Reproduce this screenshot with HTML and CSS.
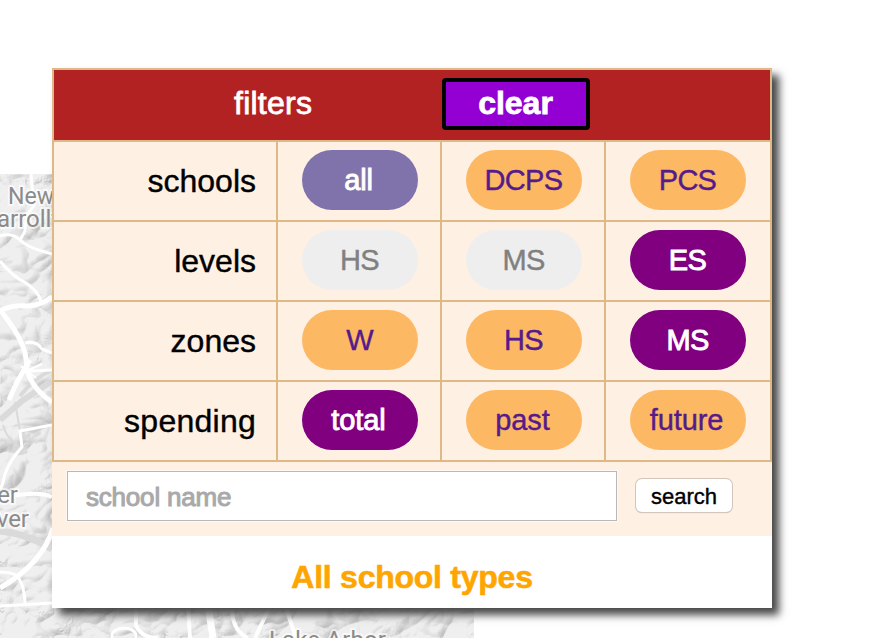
FILE: index.html
```html
<!DOCTYPE html>
<html lang="en">
<head>
<meta charset="utf-8">
<title>School filters</title>
<link rel="stylesheet" href="styles.css">
</head>
<body>
<svg class="map" width="474" height="464" viewBox="0 174 474 464" aria-hidden="true">
  <defs>
    <filter id="relief" x="0" y="0" width="100%" height="100%" color-interpolation-filters="sRGB">
      <feTurbulence type="turbulence" baseFrequency="0.018 0.022" numOctaves="3" seed="14"/>
      <feColorMatrix values="0 0 0 0 0  0 0 0 0 0  0 0 0 0 0  1.1 0 0 0 0"/>
      <feDiffuseLighting surfaceScale="7" diffuseConstant="1.16" lighting-color="#fff">
        <feDistantLight azimuth="225" elevation="60"/>
      </feDiffuseLighting>
      <feComponentTransfer>
        <feFuncR type="linear" slope=".32" intercept=".62"/>
        <feFuncG type="linear" slope=".32" intercept=".62"/>
        <feFuncB type="linear" slope=".32" intercept=".62"/>
      </feComponentTransfer>
    </filter>
  </defs>
  <rect y="174" width="474" height="464" fill="#ececec"/>
  <rect y="174" width="474" height="464" filter="url(#relief)"/>
  <g class="minor">
    <path d="M0 420 L22 401 L52 381" stroke-width="6"/>
    <path d="M0 531 Q28 534 52 549" stroke-width="7"/>
    <path d="M15 402 L20 431M3 425Q7 439 17 444M21 433L37 443" stroke-width="2"/>
    <path d="M20 396Q34 378 52 370" stroke-width="4"/>
  </g>
  <g class="road">
    <path d="M31 174 L34 206 Q25 214 25 231 L20 240" stroke-width="3"/>
    <path d="M0 236 Q12 232 20 240 T52 254" stroke-width="3"/>
    <path d="M0 261 Q12 276 26 283 Q38 291 41 301" stroke-width="3"/>
    <path d="M0 311 Q10 305 27 306 Q40 306 52 297" stroke-width="5"/>
    <path d="M0 310 Q24 339 26 359 Q26 385 52 402" stroke-width="5"/>
    <path d="M25 343 Q36 340 42 349 L52 353M52 370 L30 371" stroke-width="3"/>
    <path d="M30 360 Q16 382 9 400" stroke-width="5"/>
    <path d="M42 364 Q20 373 14 384M21 366 L36 378" stroke-width="2"/>
    <path d="M52 425 L20 431 L22 447 Q5 466 3 483 L0 489" stroke-width="3"/>
    <path d="M0 499 Q12 495 28 494 T52 497" stroke-width="4"/>
    <path d="M0 588 Q43 563 53 528" stroke-width="5"/>
    <path d="M0 572 Q18 572 20 581 Q24 586 25 603M0 606 L52 603" stroke-width="3"/>
    <path d="M136 605 L136 625 Q141 638 158 638" stroke-width="4"/>
    <ellipse cx="124" cy="636" rx="12" ry="8" stroke-width="3"/>
    <path d="M188 605 L190 638" stroke-width="4"/>
    <path d="M232 605 Q231 630 248 638M270 606 L255 638M285 605 L296 638" stroke-width="4"/>
    <path d="M208 605 L213 638" stroke-width="7"/>
  </g>
  <g class="place">
    <text x="8" y="204" textLength="46" lengthAdjust="spacingAndGlyphs">New</text>
    <text x="-3" y="227">arrollt</text>
    <text x="18" y="503" text-anchor="end">er</text>
    <text x="29" y="527" text-anchor="end">ver</text>
    <text x="269" y="648" textLength="117">Lake Arbor</text>
  </g>
</svg>
<main class="panel">
  <div class="filters">
    <header class="head">
      <span class="head-title">filters</span>
      <a class="clear">clear</a>
    </header>
    <div class="label">schools</div>
    <div class="cell"><a class="pill word all">all</a></div>
    <div class="cell"><a class="pill">DCPS</a></div>
    <div class="cell"><a class="pill">PCS</a></div>
    <div class="label">levels</div>
    <div class="cell"><a class="pill off">HS</a></div>
    <div class="cell"><a class="pill off">MS</a></div>
    <div class="cell"><a class="pill on">ES</a></div>
    <div class="label">zones</div>
    <div class="cell"><a class="pill">W</a></div>
    <div class="cell"><a class="pill">HS</a></div>
    <div class="cell"><a class="pill on">MS</a></div>
    <div class="label wide">spending</div>
    <div class="cell"><a class="pill word on">total</a></div>
    <div class="cell"><a class="pill word">past</a></div>
    <div class="cell"><a class="pill word">future</a></div>
  </div>
  <form class="search">
    <input class="field" type="text" placeholder="school name">
    <button class="go" type="button">search</button>
  </form>
  <p class="summary">All school types</p>
</main>
</body>
</html>
```

FILE: styles.css
```css
* { box-sizing: border-box; }

body {
  margin: 0;
  height: 638px;
  padding: 68px 0 0 52px;
  position: relative;
  overflow: hidden;
  background: #fff;
  font-family: "Liberation Sans", Arial, sans-serif;
}

.map {
  position: absolute;
  left: 0;
  top: 174px;
}

.road, .minor { fill: none; stroke: #fff; }
.minor { stroke: #dadada; }

.place {
  font-family: Roboto, sans-serif;
  font-size: 24px;
  fill: #8b8b8b;
  stroke: rgba(255, 255, 255, .65);
  stroke-width: 4px;
  stroke-linejoin: round;
  paint-order: stroke;
}

.panel {
  position: relative;
  width: 720px;
  height: 540px;
  background: #fff;
  box-shadow: 7px 7px 8px #484848;
}

.filters {
  display: grid;
  grid-template-columns: 222px 162px 162px 164px;
  grid-template-rows: 70px repeat(4, 78px);
  gap: 2px;
  padding: 2px;
  background: #deb887;
}

.head {
  grid-column: 1 / -1;
  display: flex;
  align-items: flex-start;
  padding: 8px 0 0 180px;
  background: #b22222;
  color: #fff;
  font-size: 32px;
}

.head-title {
  width: 208px;
  line-height: 50px;
  letter-spacing: .25px;
  -webkit-text-stroke: .8px;
}

.clear {
  width: 148px;
  height: 52px;
  border: 4px solid #000;
  border-radius: 4px;
  background: #9400d3;
  font-weight: bold;
  line-height: 42px;
  text-align: center;
  text-indent: -1px;
  -webkit-text-stroke: .8px;
}

.label {
  padding-right: 20px;
  background: #fff0e4;
  font-size: 32px;
  line-height: 78px;
  text-align: right;
  -webkit-text-stroke: .4px;
}

.label.wide { letter-spacing: .25px; }

.cell {
  padding: 8px 0 0 24px;
  background: #fff0e4;
}

.pill {
  display: block;
  width: 116px;
  height: 60px;
  border-radius: 30px;
  background: #fdb863;
  color: #551a8b;
  font-size: 29px;
  line-height: 60px;
  letter-spacing: -.7px;
  text-indent: -1px;
  text-align: center;
  -webkit-text-stroke: .4px;
}

.pill.word { letter-spacing: -.1px; text-indent: -3px; }
.pill.all { background: #8073ac; color: #fff; -webkit-text-stroke: .9px; }
.pill.on { background: #800080; color: #fff; -webkit-text-stroke: .9px; }
.pill.off { background: #eee; color: #808080; }

.search {
  display: flex;
  align-items: flex-start;
  height: 74px;
  padding: 9px 0 0 15px;
  background: #fff0e4;
}

.field {
  width: 550px;
  height: 50px;
  padding: 2px 18px 0;
  border: 1px solid #b8b8b8;
  border-radius: 0;
  background: #fff;
  box-shadow: 0 0 0 1px #fff8f2;
  font: 26px "Liberation Sans", Arial, sans-serif;
}

.field::placeholder {
  color: #a9a9a9;
  letter-spacing: -.2px;
  -webkit-text-stroke: 1px;
}

.go {
  width: 96px;
  height: 33px;
  margin: 8px 0 0 19px;
  padding: 0;
  border: 0;
  border-radius: 6px;
  background: #fff;
  box-shadow: 0 0 0 1px #d2c5bb, 0 1px 1px #bdb1a8;
  color: #000;
  font: 22px/35px "Liberation Sans", Arial, sans-serif;
  -webkit-text-stroke: .4px;
}

.summary {
  margin: 0;
  color: #ffa500;
  font-size: 32px;
  font-weight: bold;
  line-height: 82px;
  letter-spacing: -.25px;
  text-align: center;
  -webkit-text-stroke: .6px;
}
```
